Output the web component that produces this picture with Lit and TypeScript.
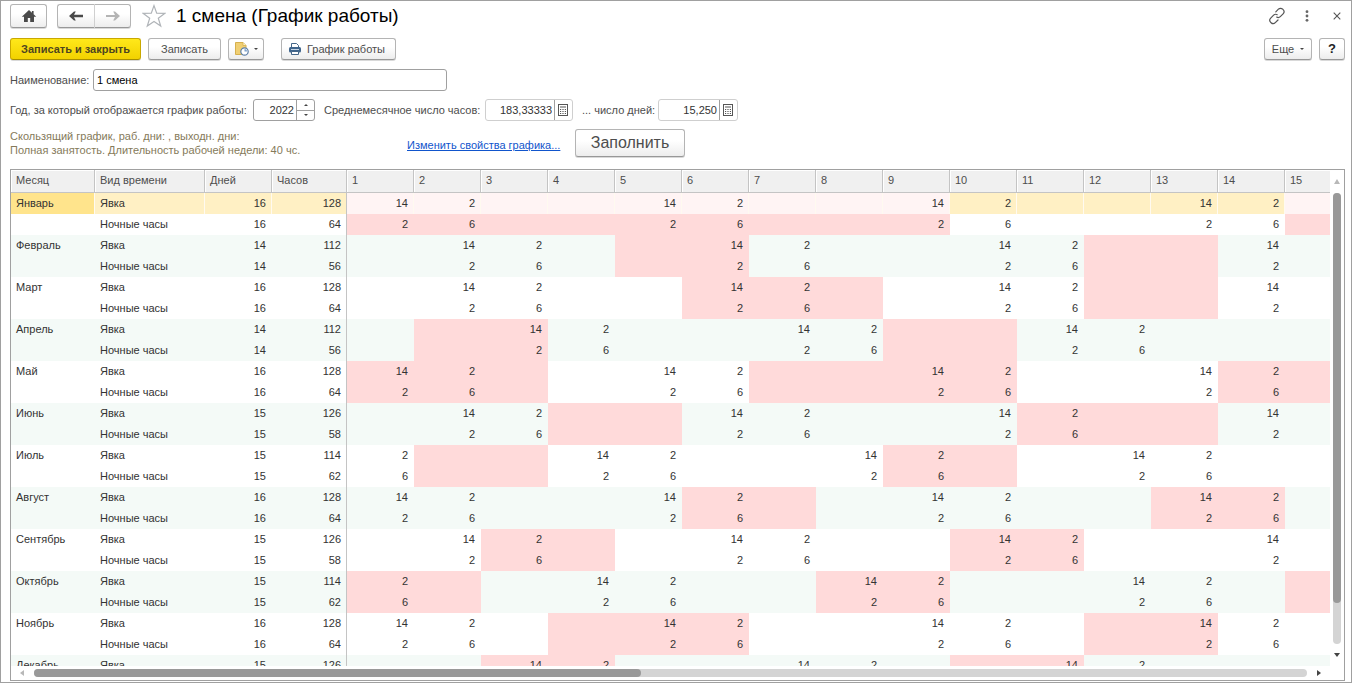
import { LitElement, html, css, svg, nothing } from "lit";
import { customElement } from "lit/decorators.js";
import { classMap } from "lit/directives/class-map.js";

interface Month {
  name: string;
  days: number;
  hours: number;
  nightHours: number;
  /** Days on which an evening shift starts (14 h before midnight). */
  starts: number[];
  /** Days that carry the rest of the shift (2 h after midnight). */
  ends: number[];
  off: number[];
}

const DAYS = Array.from({ length: 15 }, (_, i) => i + 1);

const A = { starts: [1, 5, 9, 13], ends: [2, 6, 10, 14] };
const B = { starts: [2, 6, 10, 14], ends: [3, 7, 11] };
const C = { starts: [3, 7, 11], ends: [4, 8, 12] };
const D = { starts: [4, 8, 12], ends: [1, 5, 9, 13] };

const MONTHS: Month[] = [
  { name: "Январь", days: 16, hours: 128, nightHours: 64, ...A, off: [1, 2, 3, 4, 5, 6, 7, 8, 9, 15] },
  { name: "Февраль", days: 14, hours: 112, nightHours: 56, ...B, off: [5, 6, 12, 13] },
  { name: "Март", days: 16, hours: 128, nightHours: 64, ...B, off: [6, 7, 8, 12, 13] },
  { name: "Апрель", days: 14, hours: 112, nightHours: 56, ...C, off: [2, 3, 9, 10] },
  { name: "Май", days: 16, hours: 128, nightHours: 64, ...A, off: [1, 2, 3, 7, 8, 9, 10, 14, 15] },
  { name: "Июнь", days: 15, hours: 126, nightHours: 58, ...B, off: [4, 5, 11, 12, 13] },
  { name: "Июль", days: 15, hours: 114, nightHours: 62, ...D, off: [2, 3, 9, 10] },
  { name: "Август", days: 16, hours: 128, nightHours: 64, ...A, off: [6, 7, 13, 14] },
  { name: "Сентябрь", days: 15, hours: 126, nightHours: 58, ...B, off: [3, 4, 10, 11] },
  { name: "Октябрь", days: 15, hours: 114, nightHours: 62, ...D, off: [1, 2, 8, 9, 15] },
  { name: "Ноябрь", days: 16, hours: 128, nightHours: 64, ...A, off: [4, 5, 6, 12, 13] },
  { name: "Декабрь", days: 15, hours: 126, nightHours: 58, ...C, off: [3, 4, 10, 11] },
];

const calcIcon = svg`<svg width="10" height="12" viewBox="0 0 10 12" aria-hidden="true">
  <rect x="0.5" y="0.5" width="9" height="11" fill="#fff" stroke="#555"/>
  <path d="M2 3h6" stroke="#555" stroke-width="1"/>
  <path d="M2 5.5h6M2 7.5h6M2 9.5h6" stroke="#555" stroke-dasharray="1.2 1.2"/>
</svg>`;

@customElement("app-root")
export class AppRoot extends LitElement {
  static styles = css`
    :host {
      display: block;
      font: 11px/14px "Liberation Sans", Arial, sans-serif;
      color: #4d4d4d;
    }
    * { box-sizing: border-box; }
    button, input { font: inherit; color: inherit; margin: 0; }
    svg { display: block; flex: none; }
    .window {
      height: 100vh;
      display: flex;
      flex-direction: column;
      border: 1px solid #a0a0a0;
      padding: 3px 6px 1px 9px;
      background: #fff;
    }
    .titlebar, .toolbar, .row { display: flex; align-items: center; flex: none; }
    .titlebar { height: 24px; }
    .titlebar h1 {
      margin: 0 auto 0 10px;
      font-size: 19px;
      line-height: 24px;
      font-weight: normal;
      color: #000;
      white-space: nowrap;
    }
    .btn {
      display: flex;
      align-items: center;
      justify-content: center;
      gap: 6px;
      height: 22px;
      padding: 0 11px;
      border: 1px solid #b4b4b4;
      border-bottom-color: #989898;
      border-radius: 3px;
      background: linear-gradient(#fff 40%, #ededed);
      box-shadow: 0 1px 0 #d9d9d9;
      white-space: nowrap;
    }
    .home { width: 37px; height: 24px; padding: 0; margin-right: 10px; }
    .nav { display: flex; margin-right: 11px; }
    .nav .btn { width: 37px; height: 24px; padding: 0; }
    .nav .back { width: 38px; border-radius: 3px 0 0 3px; border-right-color: #d0d0d0; }
    .nav .forward { width: 36px; border-radius: 0 3px 3px 0; border-left: 0; }
    .plain { border: 0; background: none; padding: 0; width: 24px; height: 24px; display: grid; place-items: center; }
    .window-tools { display: flex; gap: 6px; margin-right: -4px; }
    .toolbar { margin-top: 10px; gap: 7px; }
    .primary {
      width: 131px;
      padding: 0;
      font-weight: bold;
      color: #4d4520;
      background: linear-gradient(#ffe81a, #f2d200);
      border-color: #c9a800;
      border-bottom-color: #a88f00;
    }
    .save { width: 73px; padding: 0; }
    .attach { width: 36px; padding: 0; gap: 5px; }
    .print { width: 115px; padding: 0 0 0 7px; margin-left: 10px; justify-content: flex-start; }
    .more { width: 48px; padding: 0; margin-left: auto; }
    .help { width: 26px; padding: 0; font-size: 13px; font-weight: bold; color: #222; }
    .row { margin-top: 8px; }
    .row.first { margin-top: 9px; }
    label { white-space: nowrap; flex: none; }
    .w-name { width: 83px; }
    .w-year { width: 243px; }
    .w-hours { width: 161px; margin-left: 9px; }
    .w-days { width: 76px; margin-left: 9px; }
    .field {
      display: flex;
      height: 22px;
      border: 1px solid #a0a0a0;
      border-radius: 3px;
      background: #fff;
      overflow: hidden;
    }
    .field input { flex: 1; min-width: 0; border: 0; outline: 0; padding: 0 2px 0 3px; background: none; color: #333; }
    .field.name { width: 354px; }
    .field.name input { color: #000; }
    .field.year { width: 62px; }
    .field.hours { width: 88px; }
    .field.days { width: 80px; }
    .field.soft { border-color: #cfcfcf; }
    .num { text-align: right; }
    .spin { width: 18px; display: flex; flex-direction: column; border-left: 1px solid #a0a0a0; }
    .spin button, .calc { flex: 1; border: 0; padding: 0; background: none; display: grid; place-items: center; }
    .spin button + button { border-top: 1px solid #a0a0a0; }
    .field .calc { flex: none; width: 18px; padding-right: 2px; border-left: 1px solid #a0a0a0; }
    .about { width: 397px; margin: 0; color: #857a5a; }
    a { color: #1155cc; width: 168px; padding-top: 4px; white-space: nowrap; }
    .fill { width: 110px; height: 28px; padding: 0; font-size: 16px; }
    .grid {
      flex: 1;
      min-height: 0;
      margin-top: 12px;
      display: grid;
      grid-template: minmax(0, 1fr) 14px / minmax(0, 1fr) 14px;
      border: 1px solid #a0a0a0;
    }
    .viewport { overflow: hidden; }
    table { width: 0; min-width: 1341px; table-layout: fixed; border-collapse: separate; border-spacing: 0; color: #333; }
    .c-month { width: 84px; }
    .c-kind { width: 110px; }
    .c-days { width: 67px; }
    .c-hours { width: 75px; }
    th, td {
      height: 21px;
      padding: 0 5px 2px;
      border-right: 1px solid transparent;
      text-align: left;
      font-weight: normal;
      white-space: nowrap;
    }
    thead th {
      height: 23px;
      background: #f0f0f0;
      color: #4d4d4d;
      border-right-color: #c4c4c4;
      border-bottom: 1px solid #c4c4c4;
      box-shadow: inset 1px 1px 0 #fff;
    }
    td.n { text-align: right; }
    td.total { border-right-color: #c4c4c4; }
    tr.alt { background: #f4faf7; }
    tr .off { background: #ffdada; }
    tr.current { background: #fff0c4; }
    tr.current td, tr.current th { border-right-color: #fffaf0; }
    tr.current th { background: #ffe48c; }
    tr.current .off { background: #fff4f4; }
    tr.current td.total { border-right-color: #c4c4c4; }
    .vbar, .hbar { display: flex; align-items: center; }
    .vbar { flex-direction: column; padding: 9px 0; }
    .hbar { padding: 0 9px; }
    .track { flex: 1; border-radius: 4px; background: #d4d4d4; display: flex; }
    .thumb { border-radius: 4px; background: #999; }
    .vbar .track { width: 8px; margin: 9px 0; flex-direction: column; }
    .vbar .thumb { height: 91%; }
    .hbar .track { height: 8px; margin: 0 10px; }
    .hbar .thumb { width: 47.7%; }
  `;

  private renderRow(m: Month, index: number, night: boolean) {
    const [first, second] = night ? [2, 6] : [14, 2];
    return html`<tr class=${classMap({ alt: index % 2 === 1, current: index === 0 && !night })}>
      ${night ? html`<td></td>` : html`<th scope="row">${m.name}</th>`}
      <td>${night ? "Ночные часы" : "Явка"}</td>
      <td class="n">${m.days}</td>
      <td class="n total">${night ? m.nightHours : m.hours}</td>
      ${DAYS.map((d) => html`<td class=${classMap({ n: true, off: m.off.includes(d) })}>${
        m.starts.includes(d) ? first : m.ends.includes(d) ? second : nothing}</td>`)}
    </tr>`;
  }

  render() {
    return html`<main class="window">
      <header class="titlebar">
        <button class="btn home" aria-label="Главная">
          <svg width="16" height="14" viewBox="0 0 16 14"><path fill="#4a4a4a" d="M8 1 .8 7.800h2.200V13h3.800V9h2.400v4H13V7.800h2.200L12.600 5.300V2h-1.700v1.700z"/></svg>
        </button>
        <div class="nav">
          <button class="btn back" aria-label="Назад">
            <svg width="14" height="12" viewBox="0 0 14 12"><path d="M14 4.800v2.400H5l1.800 3.300H5L0 6l5-4.500h1.800L5 4.800z" fill="#4a4a4a"/></svg>
          </button>
          <button class="btn forward" aria-label="Вперед">
            <svg width="14" height="12" viewBox="0 0 14 12"><path d="M0 5v2h9l-1.800 3.500H9L14 6 9 1.500H7.200L9 5z" fill="#b4b4b4"/></svg>
          </button>
        </div>
        <button class="plain" aria-label="В избранное">
          <svg width="24" height="24" viewBox="0 0 24 24"><path d="M12 1.600l2.700 7.600 8 .2-6.400 4.900 2.400 7.700L12 17.400 5.300 22l2.400-7.700L1.300 9.400l8-.2z" fill="#fff" stroke="#b0b4b8" stroke-width="1.200"/></svg>
        </button>
        <h1>1 смена (График работы)</h1>
        <div class="window-tools">
          <button class="plain" aria-label="Ссылка">
            <svg width="18" height="18" viewBox="0 0 18 18" fill="none" stroke="#555" stroke-width="1.200" stroke-linecap="round"><path d="M7.800 4.800l2.600-2.600a3 3 0 0 1 4.300 0l.4.4a3 3 0 0 1 0 4.200l-2.800 2.800a3 3 0 0 1-3.600.500M10 13l-2.700 2.700a3 3 0 0 1-4.200 0l-.4-.4a3 3 0 0 1 0-4.200l2.900-2.900a3 3 0 0 1 3.600-.500"/></svg>
          </button>
          <button class="plain" aria-label="Меню">
            <svg width="4" height="12" viewBox="0 0 4 12" fill="#666"><circle cx="2" cy="1.700" r="1.400"/><circle cx="2" cy="6" r="1.400"/><circle cx="2" cy="10.300" r="1.400"/></svg>
          </button>
          <button class="plain" aria-label="Закрыть">
            <svg width="8" height="8" viewBox="0 0 8 8"><path d="M.7.700l6.600 6.600M7.300.700L.7 7.300" stroke="#555" stroke-width="1.100"/></svg>
          </button>
        </div>
      </header>

      <div class="toolbar">
        <button class="btn primary">Записать и закрыть</button>
        <button class="btn save">Записать</button>
        <button class="btn attach" aria-label="Присоединенные файлы">
          <svg width="14" height="14" viewBox="0 0 14 14"><path d="M.5.500h7.500L11 3.500v9H.5z" fill="#f0cf73" stroke="#d6b04e"/><path d="M8 .5v3h3" fill="#fff3cc" stroke="#d6b04e" stroke-width=".8"/><circle cx="9.500" cy="9.500" r="3.700" fill="#fff" stroke="#5d7fa8" stroke-width="1.200"/><path d="M9.500 9.500V7a2.500 2.500 0 0 1 2.500 2.500z" fill="#7fa3cc"/></svg>
          <svg width="4" height="2" viewBox="0 0 4 2"><path d="M0 0h4L2 2z" fill="#444"/></svg>
        </button>
        <button class="btn print">
          <svg width="12" height="12" viewBox="0 0 12 12"><path d="M2.500 4.500v-4h5l2 2v2" fill="#fff" stroke="#456789"/><rect x="0" y="4" width="12" height="5.500" rx="1.500" fill="#3f658c"/><path d="M2 6.500h8" stroke="#c5d5e5"/><path d="M2.500 8.500h7v3h-7z" fill="#fff" stroke="#456789"/></svg>
          График работы
        </button>
        <button class="btn more">Еще <svg width="4" height="2" viewBox="0 0 4 2"><path d="M0 0h4L2 2z" fill="#444"/></svg></button>
        <button class="btn help">?</button>
      </div>

      <div class="row first">
        <label class="w-name" for="name">Наименование:</label>
        <div class="field name"><input id="name" .value=${"1 смена"}></div>
      </div>

      <div class="row">
        <label class="w-year" for="year">Год, за который отображается график работы:</label>
        <div class="field year">
          <input id="year" class="num" .value=${"2022"}>
          <div class="spin">
            <button aria-label="Больше"><svg width="4" height="2" viewBox="0 0 4 2"><path d="M0 2h4L2 0z" fill="#444"/></svg></button>
            <button aria-label="Меньше"><svg width="4" height="2" viewBox="0 0 4 2"><path d="M0 0h4L2 2z" fill="#444"/></svg></button>
          </div>
        </div>
        <label class="w-hours" for="hours">Среднемесячное число часов:</label>
        <div class="field soft hours">
          <input id="hours" class="num" .value=${"183,33333"}>
          <button class="calc" aria-label="Калькулятор">${calcIcon}</button>
        </div>
        <label class="w-days" for="days">... число дней:</label>
        <div class="field soft days">
          <input id="days" class="num" .value=${"15,250"}>
          <button class="calc" aria-label="Калькулятор">${calcIcon}</button>
        </div>
      </div>

      <div class="row">
        <p class="about">Скользящий график, раб. дни: , выходн. дни:<br>Полная занятость. Длительность рабочей недели: 40 чс.</p>
        <a href="#">Изменить свойства графика...</a>
        <button class="btn fill">Заполнить</button>
      </div>

      <section class="grid">
        <div class="viewport">
          <table>
            <colgroup>
              <col class="c-month"><col class="c-kind"><col class="c-days"><col class="c-hours">
              ${DAYS.map(() => html`<col class="c-days">`)}
            </colgroup>
            <thead>
              <tr>
                <th scope="col">Месяц</th><th scope="col">Вид времени</th><th scope="col">Дней</th><th scope="col">Часов</th>
                ${DAYS.map((d) => html`<th scope="col">${d}</th>`)}
              </tr>
            </thead>
            <tbody>
              ${MONTHS.map((m, i) => [this.renderRow(m, i, false), this.renderRow(m, i, true)])}
            </tbody>
          </table>
        </div>
        <div class="vbar">
          <svg width="6" height="5" viewBox="0 0 6 5"><path d="M0 5h6L3 0z" fill="#b8b8b8"/></svg>
          <div class="track"><div class="thumb"></div></div>
          <svg width="6" height="4" viewBox="0 0 6 4"><path d="M0 0h6L3 4z" fill="#444"/></svg>
        </div>
        <div class="hbar">
          <svg width="4" height="6" viewBox="0 0 4 6"><path d="M4 0v6L0 3z" fill="#b8b8b8"/></svg>
          <div class="track"><div class="thumb"></div></div>
          <svg width="4" height="6" viewBox="0 0 4 6"><path d="M0 0v6l4-3z" fill="#444"/></svg>
        </div>
      </section>
    </main>`;
  }
}
